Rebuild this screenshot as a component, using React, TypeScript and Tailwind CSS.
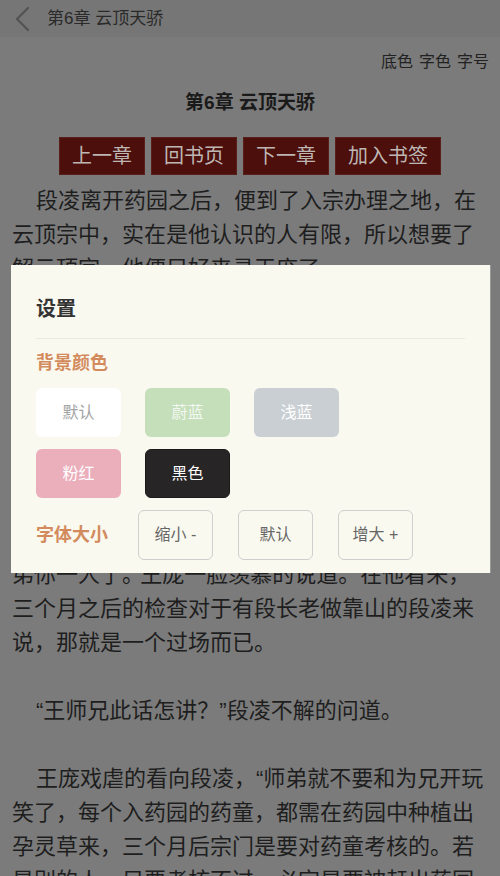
import React from "react";

const font = { fontFamily: '"Liberation Sans", "Noto Sans CJK SC", sans-serif' };

function ChapterButton({ label }: { label: string }) {
  return (
    <button className="h-[38px] px-[12px] bg-[#4c0f0b] border border-[#5a1f1a] text-[20px] leading-[36px] text-[#bdb6b3]">
      {label}
    </button>
  );
}

function ColorSwatch({ label, cls }: { label: string; cls: string }) {
  return (
    <div className={`w-[85px] h-[49px] rounded-[6px] flex items-center justify-center text-[16px] ${cls}`}>
      {label}
    </div>
  );
}

function SizeButton({ label }: { label: string }) {
  return (
    <button className="w-[75px] h-[50px] rounded-[6px] border border-[#cfcfcf] text-[16px] text-[#666666] flex items-center justify-center">
      {label}
    </button>
  );
}

export default function App() {
  return (
    <div className="relative w-[500px] h-[876px] overflow-hidden bg-[#7b7b7b] text-[#1f1f1f]" style={font}>
      <header className="h-[37px] bg-[#767676] flex items-center">
        <svg className="ml-[14px]" width="16" height="26" viewBox="0 0 16 26" fill="none">
          <polyline points="14,2 3,13 14,24" stroke="#545454" strokeWidth="2.4" strokeLinecap="round" strokeLinejoin="round" />
        </svg>
        <span className="ml-[17px] text-[17px] text-[#2a2a2a]">第6章 云顶天骄</span>
      </header>

      <div className="flex justify-end gap-[6px] pr-[11px] mt-[11px] h-[28px] items-center text-[16px] text-[#222222]">
        <span>底色</span>
        <span>字色</span>
        <span>字号</span>
      </div>

      <h1 className="mt-[13px] text-center text-[19px] font-bold leading-[28px] text-[#1a1a1a]">第6章 云顶天骄</h1>

      <div className="mt-[20px] flex justify-center gap-[6px]">
        <ChapterButton label="上一章" />
        <ChapterButton label="回书页" />
        <ChapterButton label="下一章" />
        <ChapterButton label="加入书签" />
      </div>

      <article className="mt-[9px] px-[12px] text-[22px] leading-[34px] text-[#1e1e1e]">
        <p className="indent-[24px]">
          段凌离开药园之后，便到了入宗办理之地，在云顶宗中，实在是他认识的人有限，所以想要了解云顶宗，他便只好来寻王庞了。
        </p>
        <p className="indent-[24px] mt-[34px]">
          “段师弟，你这次能进药园可真是走了大运了，药园乃是外门之中最为重要的地方之一，每一年都不知道有多少外门弟子挤破了头想要进去，可最后真正能够进去的却是寥寥无几，就算是那些有背景的内门弟子也得经过层层考核才行，而且考核的长老铁面无私，从来不讲半点情面，整个外门这么多年来能够直接进入药园的也就只有师弟你一人了。”王庞一脸羡慕的说道。在他看来，三个月之后的检查对于有段长老做靠山的段凌来说，那就是一个过场而已。
        </p>
        <p className="indent-[24px] mt-[34px]">“王师兄此话怎讲？”段凌不解的问道。</p>
        <p className="indent-[24px] mt-[34px]">
          王庞戏虐的看向段凌，“师弟就不要和为兄开玩笑了，每个入药园的药童，都需在药园中种植出孕灵草来，三个月后宗门是要对药童考核的。若是别的人，只要考核不过，必定是要被赶出药园的。”
        </p>
      </article>

      <div className="absolute left-[11px] top-[265px] w-[479px] bg-[#faf9ef] px-[25px] pt-[30px] pb-[13px] shadow-[1px_0_0_#9a9a9a]">
        <h2 className="text-[20px] font-bold leading-[28px] text-[#333333]">设置</h2>
        <div className="mt-[15px] h-px bg-[#ebeae1]" />
        <h3 className="mt-[11px] text-[18px] font-bold leading-[26px] text-[#d38b5d]">背景颜色</h3>
        <div className="mt-[12px] grid grid-cols-[repeat(3,85px)] gap-x-[24px] gap-y-[12px]">
          <ColorSwatch label="默认" cls="bg-white text-[#a3a3a3]" />
          <ColorSwatch label="蔚蓝" cls="bg-[#c5dfbb] text-[#f2f7ef]" />
          <ColorSwatch label="浅蓝" cls="bg-[#c9cfd3] text-white" />
          <ColorSwatch label="粉红" cls="bg-[#ebaebb] text-white" />
          <ColorSwatch label="黑色" cls="bg-[#272526] border border-[#1a1a1a] text-white" />
        </div>
        <div className="mt-[12px] flex items-center gap-[25px]">
          <span className="text-[18px] font-bold text-[#d38b5d] w-[77px]">字体大小</span>
          <SizeButton label="缩小 -" />
          <SizeButton label="默认" />
          <SizeButton label="增大 +" />
        </div>
      </div>
    </div>
  );
}
